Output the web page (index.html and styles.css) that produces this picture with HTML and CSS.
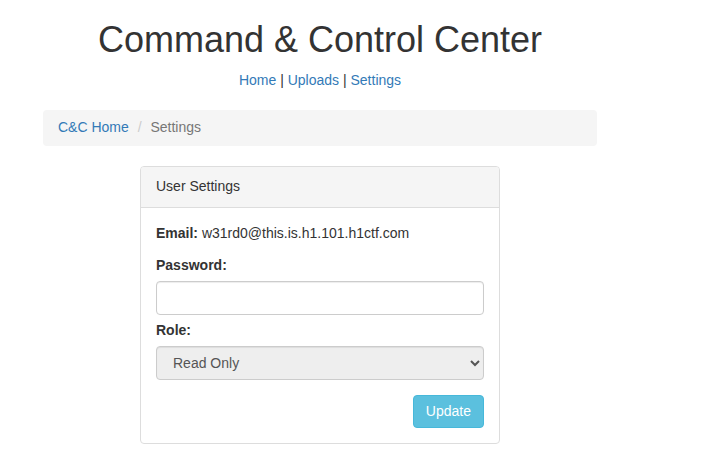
FILE: index.html
```html
<!DOCTYPE html>
<html>
<head>
<meta charset="utf-8">
<title>Settings</title>
<link rel="stylesheet" href="styles.css">
</head>
<body>
<div class="container">
  <h1 class="title">Command &amp; Control Center</h1>
  <div class="topnav"><a href="#">Home</a> | <a href="#">Uploads</a> | <a href="#">Settings</a></div>
  <ol class="breadcrumb">
    <li><a href="#">C&amp;C Home</a></li>
    <li class="active">Settings</li>
  </ol>
  <div class="panel">
    <div class="panel-heading">User Settings</div>
    <div class="panel-body">
      <p class="email"><b>Email:</b> w31rd0@this.is.h1.101.h1ctf.com</p>
      <label class="lbl">Password:</label>
      <input class="form-control pw" type="password">
      <label class="lbl">Role:</label>
      <select class="form-control select" disabled>
        <option>Read Only</option>
      </select>
      <div class="actions"><button class="btn">Update</button></div>
    </div>
  </div>
</div>
</body>
</html>
```
FILE: styles.css
```css
* { box-sizing: border-box; }
body {
  margin: 0;
  font-family: "Liberation Sans", Arial, sans-serif;
  font-size: 14px;
  line-height: 1.42857;
  color: #333;
  background: #fff;
}
a { color: #337ab7; text-decoration: none; }
.container {
  width: 554px;
  margin-left: 43px;
}
.title {
  margin: 20px 0 0;
  font-size: 36px;
  font-weight: 400;
  line-height: 1.1;
  text-align: center;
  color: #333;
}
.topnav {
  margin-top: 11px;
  text-align: center;
}
.breadcrumb {
  list-style: none;
  margin: 19px 0 20px;
  padding: 8px 15px;
  background: #f5f5f5;
  border-radius: 4px;
}
.breadcrumb li { display: inline-block; }
.breadcrumb li.active { color: #777; }
.breadcrumb li + li::before {
  content: "/\00a0";
  padding: 0 5px;
  color: #ccc;
}
.panel {
  width: 360px;
  margin: 0 auto;
  border: 1px solid #ddd;
  border-radius: 4px;
}
.panel-heading {
  padding: 10px 15px;
  background: #f5f5f5;
  border-bottom: 1px solid #ddd;
  border-radius: 3px 3px 0 0;
}
.panel-body { padding: 15px; }
.email { margin: 1px 0 12px; }
.lbl {
  display: block;
  font-weight: 700;
  margin-bottom: 5px;
}
.form-control {
  display: block;
  width: 100%;
  height: 34px;
  padding: 6px 12px;
  font-family: inherit;
  font-size: 14px;
  color: #555;
  background: #fff;
  border: 1px solid #ccc;
  border-radius: 4px;
  box-shadow: inset 0 1px 1px rgba(0,0,0,.075);
  margin-bottom: 15px;
}
.pw { margin-bottom: 6px; }
.select {
  background: #eee;
  opacity: 1;
}
.actions {
  display: flex;
  justify-content: flex-end;
}
.btn {
  font-family: inherit;
  font-size: 14px;
  line-height: 1.42857;
  padding: 6px 12px;
  color: #fff;
  background: #5bc0de;
  border: 1px solid #46b8da;
  border-radius: 4px;
}
```
